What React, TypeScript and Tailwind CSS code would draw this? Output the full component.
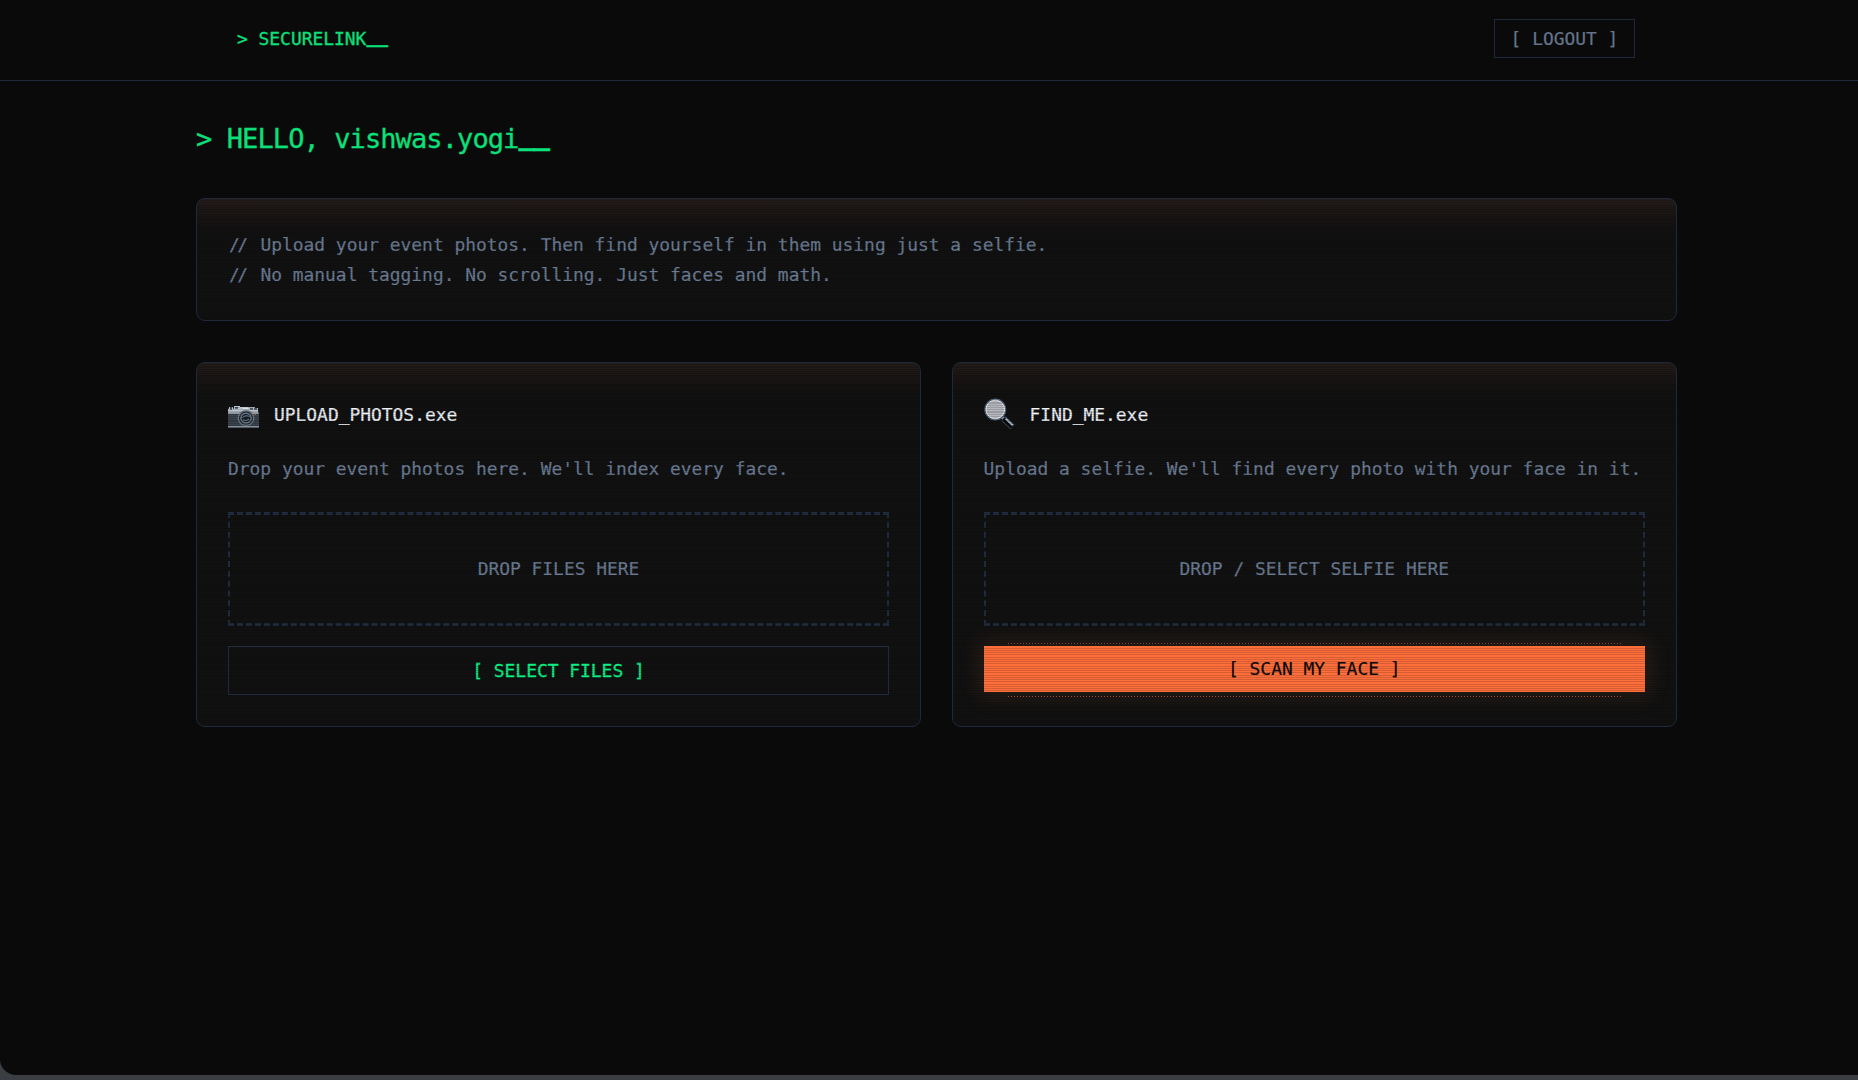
import type { ReactNode } from "react";

// ──────────────────────────────────────────────────────────────────
// Icons
// ──────────────────────────────────────────────────────────────────

function CameraIcon() {
  return (
    <svg className="mt-[5px]" width="31" height="22" viewBox="0 0 31 23" preserveAspectRatio="none" aria-hidden>
      <rect x="0" y="5" width="31" height="18" rx="1" fill="#3a424b" />
      <path d="M1 1h4v2h1V0h6v3h3V1h12v1h3v6H0V3h1z" fill="#bcc5ce" />
      <path d="M2 1h2v3H2zM7 1h3v2H7z" fill="#434c55" />
      <path d="M12 1h8v2h-8z" fill="#e6ecf2" />
      <path d="M22 2h3v2h-3zM26 2h3v2h-3z" fill="#4b545e" />
      <path d="M0 7h31v1H0zM0 21h31v1.500H0z" fill="#84909c" />
      <rect x="26" y="8" width="2" height="1.500" fill="#b66b38" />
      <circle cx="18" cy="12.700" r="8.400" fill="#6f7d8b" />
      <circle cx="18" cy="12.700" r="7" fill="#252d35" />
      <circle cx="18" cy="12.700" r="5.800" fill="#68798a" />
      <circle cx="18" cy="12.700" r="4.300" fill="#171e25" />
      <path d="M14.500 12c2-2 5-2 7-1M15 14.500c2 1 4 1 6-1" stroke="#8393a2" strokeWidth="1" fill="none" />
    </svg>
  );
}

function MagnifierIcon() {
  return (
    <svg width="31" height="32" viewBox="0 0 31 32" aria-hidden>
      <path d="M18 19l2.500 2.500" stroke="#8291a1" strokeWidth="3.400" />
      <path d="M19.500 20.500l9 8.500" stroke="#4a596a" strokeWidth="6" />
      <path d="M19.500 20.800l8.600 8.200" stroke="#07090c" strokeWidth="4.200" />
      <path d="M21.500 20.600l7.200 6.800" stroke="#b4c0cc" strokeWidth="1.600" />
      <circle cx="11.300" cy="11.500" r="10.200" fill="#b6b8be" stroke="#52657a" strokeWidth="1.600" />
      <circle cx="11.300" cy="11.500" r="9.300" fill="none" stroke="#eef2f6" strokeWidth="1" />
    </svg>
  );
}

// ──────────────────────────────────────────────────────────────────
// Panel · dark card with a warm top edge and CRT scanlines
// ──────────────────────────────────────────────────────────────────

function Panel({ children, className }: { children: ReactNode; className: string }) {
  return (
    <section
      className={`relative overflow-hidden rounded-[9px] border border-[#1e293b] bg-[#111111] bg-[linear-gradient(to_bottom,#231c1a_0,#181413_18px,#111111_32px)] ${className}`}
    >
      {children}
      <div className="pointer-events-none absolute inset-0 bg-[repeating-linear-gradient(to_bottom,transparent_0,transparent_1.125px,rgba(0,0,0,0.16)_1.125px,rgba(0,0,0,0.16)_2.25px)]" />
    </section>
  );
}

// Terminal cursor at the end of a prompt
function Cursor({ className }: { className: string }) {
  return <span className={`relative font-bold ${className}`}>__</span>;
}

type ToolProps = {
  icon: ReactNode;
  title: string;
  description: string;
  dropLabel: string;
  action: ReactNode;
};

function ToolCard({ icon, title, description, dropLabel, action }: ToolProps) {
  return (
    <Panel className="h-[365px] px-[31px] pt-[35px]">
      <div className="flex h-8 items-center gap-[15px]">
        {icon}
        <h2 className="pt-0.5 leading-8 text-[#f1f5fb]">{title}</h2>
      </div>
      <p className="mt-[23px] whitespace-nowrap leading-[31px] text-[#6b7c94]">{description}</p>
      <div className="mt-[28px] flex h-[114px] items-center justify-center border-x-2 border-y-3 border-dashed border-[#202c3f] text-[#6b7c94]">
        {dropLabel}
      </div>
      {action}
    </Panel>
  );
}

export default function App() {
  return (
    <div className="h-[1080px] bg-[#3a3d41] font-['DejaVu_Sans_Mono',monospace] text-[17.920px] [-webkit-text-stroke:0.2px]">
      <div className="h-[1075px] rounded-bl-[16px] bg-[#0a0a0a]">
        <header className="h-[81px] border-b border-[#1e293b]">
          <div className="mx-auto flex w-[1482px] items-start justify-between pt-[19px] pr-[35px] pl-[49px]">
            <div className="leading-[39px] text-[#0be07a] [-webkit-text-stroke:0.3px]">
              &gt; SECURELINK<Cursor className="-top-[2px]" />
            </div>
            <button className="h-[39px] w-[141px] border border-[#1e293b] pt-px text-center text-[#64748b]">
              [ LOGOUT ]
            </button>
          </div>
        </header>

        <main className="ml-[196px] w-[1481px] pt-[38px]">
          <h1 className="h-10 text-[27px] leading-10 tracking-[-0.9px] text-[#0be07a] [-webkit-text-stroke:0.3px]">
            &gt; HELLO, vishwas.yogi<Cursor className="-top-[3px]" />
          </h1>

          <Panel className="mt-[39px] h-[123px] px-[32px] pt-[31px] leading-[30px] text-[#6b7c94]">
            {[
              "Upload your event photos. Then find yourself in them using just a selfie.",
              "No manual tagging. No scrolling. Just faces and math.",
            ].map((line) => (
              <p key={line} className="flex">
                <span className="w-[31.400px] tracking-[-2.500px]">//</span>
                {line}
              </p>
            ))}
          </Panel>

          <div className="mt-[41px] grid grid-cols-[725px_725.400px] gap-[30.600px]">
            <ToolCard
              icon={<CameraIcon />}
              title="UPLOAD_PHOTOS.exe"
              description="Drop your event photos here. We'll index every face."
              dropLabel="DROP FILES HERE"
              action={
                <button className="mt-5 h-[49px] w-full border border-[#202c3f] pt-px text-[#0cf085] [-webkit-text-stroke:0.3px]">
                  [ SELECT FILES ]
                </button>
              }
            />
            <ToolCard
              icon={<MagnifierIcon />}
              title="FIND_ME.exe"
              description="Upload a selfie. We'll find every photo with your face in it."
              dropLabel="DROP / SELECT SELFIE HERE"
              action={
                <button className="relative mt-5 h-[46px] w-full bg-[#ff6e3b] pt-px text-[#0a0a0a] shadow-[0_0_22px_5px_rgba(255,145,95,0.11)]">
                  <span className="absolute inset-x-6 -top-[3px] h-px bg-[repeating-linear-gradient(to_right,#9c5136_0,#9c5136_1px,transparent_1px,transparent_3px)]" />
                  [ SCAN MY FACE ]
                  <span className="absolute inset-x-6 -bottom-[5px] h-px bg-[repeating-linear-gradient(to_right,#9c5136_0,#9c5136_1px,transparent_1px,transparent_3px)]" />
                </button>
              }
            />
          </div>
        </main>
      </div>
    </div>
  );
}
